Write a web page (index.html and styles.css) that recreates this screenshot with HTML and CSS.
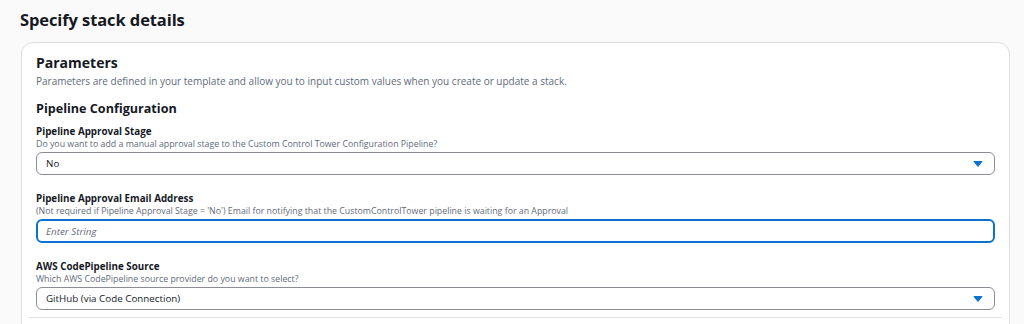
FILE: index.html
```html
<!DOCTYPE html>
<html>
<head>
<meta charset="utf-8">
<link rel="stylesheet" href="styles.css">
</head>
<body>
<div class="page">
  <h1 class="title">Specify stack details</h1>
  <section class="card">
    <h2 class="card-title">Parameters</h2>
    <p class="card-desc">Parameters are defined in your template and allow you to input custom values when you create or update a stack.</p>
    <h3 class="group-title">Pipeline Configuration</h3>

    <div class="field">
      <div class="label">Pipeline Approval Stage</div>
      <div class="hint">Do you want to add a manual approval stage to the Custom Control Tower Configuration Pipeline?</div>
      <div class="select">
        <span class="value">No</span>
        <svg class="caret" width="10" height="8" viewBox="0 0 10 8"><path d="M1 1.5h8L5 6.5z" fill="#0972d3" stroke="#0972d3" stroke-width="1" stroke-linejoin="round"/></svg>
      </div>
    </div>

    <div class="field">
      <div class="label">Pipeline Approval Email Address</div>
      <div class="hint">(Not required if Pipeline Approval Stage = 'No') Email for notifying that the CustomControlTower pipeline is waiting for an Approval</div>
      <div class="input focused"><span class="placeholder">Enter String</span></div>
    </div>

    <div class="field">
      <div class="label">AWS CodePipeline Source</div>
      <div class="hint">Which AWS CodePipeline source provider do you want to select?</div>
      <div class="select">
        <span class="value">GitHub (via Code Connection)</span>
        <svg class="caret" width="10" height="8" viewBox="0 0 10 8"><path d="M1 1.5h8L5 6.5z" fill="#0972d3" stroke="#0972d3" stroke-width="1" stroke-linejoin="round"/></svg>
      </div>
    </div>
    <div class="divider"></div>
  </section>
</div>
</body>
</html>
```

FILE: styles.css
```css
* { box-sizing: border-box; }
html, body { margin: 0; padding: 0; }
body {
  background: #fafafa;
  font-family: "Open Sans", "Noto Sans", sans-serif;
  color: #16191f;
  width: 1024px;
  height: 324px;
  overflow: hidden;
}
.page {
  padding: 7px 14px 0 21px;
}
.title {
  margin: 0 0 9px -1px;
  font-size: 16.5px;
  font-weight: 700;
  line-height: 26px;
  letter-spacing: -0.1px;
}
.card {
  background: #ffffff;
  border: 1px solid #dedee0;
  border-radius: 12px;
  padding: 10px 14px 0 14px;
  height: 300px;
}
.card-title {
  margin: 0;
  font-size: 14px;
  font-weight: 700;
  line-height: 20px;
}
.card-desc {
  margin: 0;
  font-size: 10px;
  line-height: 16px;
  color: #5f6b7a;
}
.group-title {
  margin: 11px 0 0 0;
  font-size: 12.6px;
  font-weight: 700;
  line-height: 18px;
}
.field {
  margin-top: 7px;
}
.field + .field {
  margin-top: 17px;
}
.label {
  font-size: 9.8px;
  font-weight: 700;
  line-height: 13px;
}
.hint {
  font-size: 8.8px;
  line-height: 12px;
  color: #5f6b7a;
  margin-bottom: 2px;
}
.select, .input {
  display: flex;
  align-items: center;
  justify-content: space-between;
  height: 23px;
  border: 1px solid #8c8c94;
  border-radius: 6px;
  padding: 0 11px 0 9px;
  background: #fff;
}
.value {
  font-size: 9.8px;
  color: #16191f;
}
.input.focused {
  height: 24px;
  border: 2px solid #0972d3;
  padding-left: 8px;
}
.placeholder {
  font-size: 9.8px;
  font-style: italic;
  color: #5f6b7a;
}
.caret { display: block; }
.divider {
  margin: 7px -7px 0 -7px;
  border-top: 1px solid #e0e0e2;
}
```
